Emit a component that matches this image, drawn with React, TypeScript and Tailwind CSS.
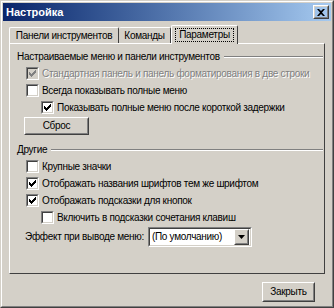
import React from "react";

const font = { fontFamily: '"Liberation Sans", "DejaVu Sans", sans-serif' };

function Check({ checked, disabled }: { checked?: boolean; disabled?: boolean }) {
  return (
    <span
      className={`relative flex h-[13px] w-[13px] shrink-0 items-center justify-center border border-t-[#808080] border-l-[#808080] border-b-white border-r-white ${
        disabled ? "bg-[#d4d0c8]" : "bg-white"
      }`}
    >
      <span className="absolute inset-0 border border-t-[#404040] border-l-[#404040] border-b-[#d4d0c8] border-r-[#d4d0c8]" />
      {checked && (
        <svg width="7" height="7" viewBox="0 0 7 7" className="relative">
          <path
            d="M0 2h1v1h1v1h1v-1h1v-1h1v-1h1v-1h1v3h-1v1h-1v1h-1v1h-1v1h-1v-1h-1v-1h-1z"
            fill={disabled ? "#808080" : "#000"}
          />
        </svg>
      )}
    </span>
  );
}

function Row({
  checked,
  disabled,
  indent,
  children,
}: {
  checked?: boolean;
  disabled?: boolean;
  indent?: boolean;
  children: React.ReactNode;
}) {
  return (
    <div className={`flex h-[17px] items-center gap-[3px] ${indent ? "pl-[31px]" : "pl-[16px]"}`}>
      <Check checked={checked} disabled={disabled} />
      <span
        className={`whitespace-nowrap ${
          disabled ? "text-[#808080] [text-shadow:1px_1px_0_#fff]" : "text-black"
        }`}
      >
        {children}
      </span>
    </div>
  );
}

function Button({ children, className }: { children: React.ReactNode; className?: string }) {
  return (
    <div
      className={`flex items-center justify-center border border-t-white border-l-white border-b-[#404040] border-r-[#404040] ${className ?? ""}`}
    >
      <div className="flex h-full w-full items-center justify-center border border-t-[#d4d0c8] border-l-[#d4d0c8] border-b-[#808080] border-r-[#808080]">
        {children}
      </div>
    </div>
  );
}

function GroupTitle({ children }: { children: React.ReactNode }) {
  return (
    <div className="flex items-center gap-[4px] pl-[7px] pr-[1px]">
      <span className="whitespace-nowrap">{children}</span>
      <div className="flex-1">
        <div className="h-px bg-[#808080]" />
        <div className="h-px bg-white" />
      </div>
    </div>
  );
}

export default function App() {
  return (
    <div
      className="flex h-[308px] w-[334px] flex-col border border-t-[#d4d0c8] border-l-[#d4d0c8] border-b-[#404040] border-r-[#404040] bg-[#d4d0c8] text-[10px] leading-none tracking-[-0.3px]"
      style={font}
    >
      <div className="flex flex-1 flex-col border border-t-white border-l-white border-b-[#808080] border-r-[#808080] px-[1px] pt-[1px]">
        {/* title bar */}
        <div className="flex h-[18px] items-center justify-between bg-gradient-to-r from-[#0a246a] to-[#a6caf0] pl-[3px] pr-[2px]">
          <span className="text-[11px] font-bold tracking-normal text-white">Настройка</span>
          <Button className="h-[14px] w-[16px]">
            <svg width="8" height="7" viewBox="0 0 8 7">
              <path d="M0 0h2l2 2 2-2h2L5 3.5 8 7H6L4 5 2 7H0l3-3.5z" fill="#000" />
            </svg>
          </Button>
        </div>

        {/* tabs */}
        <div className="mt-[3px] flex h-[19px] items-end pl-[6px]">
          <div className="flex h-[16px] w-[110px] items-center justify-center whitespace-nowrap rounded-t-[2px] border border-b-0 border-t-white border-l-white border-r-[#404040]">
            Панели инструментов
          </div>
          <div className="flex h-[16px] w-[52px] items-center justify-center whitespace-nowrap rounded-t-[2px] border border-b-0 border-l-0 border-t-white border-r-[#404040]">
            Команды
          </div>
          <div className="relative z-10 -mb-px flex h-[19px] w-[67px] items-center justify-center rounded-t-[2px] border border-b-0 border-t-white border-l-white border-r-[#404040] bg-[#d4d0c8]">
            <span className="whitespace-nowrap border border-dotted border-black px-[3px] py-[1px]">
              Параметры
            </span>
          </div>
        </div>

        {/* tab panel */}
        <div className="mx-[6px] flex h-[231px] flex-col border border-t-white border-l-white border-b-[#404040] border-r-[#404040] pt-[8px]">
          <GroupTitle>Настраиваемые меню и панели инструментов</GroupTitle>
          <div className="mt-[3px] flex flex-col">
            <Row checked disabled>
              Стандартная панель и панель форматирования в две строки
            </Row>
            <Row>Всегда показывать полные меню</Row>
            <Row checked indent>
              Показывать полные меню после короткой задержки
            </Row>
          </div>
          <div className="mt-[1px] pl-[14px]">
            <Button className="h-[18px] w-[65px]">Сброс</Button>
          </div>

          <div className="mt-[10px]">
            <GroupTitle>Другие</GroupTitle>
          </div>
          <div className="mt-[3px] flex flex-col">
            <Row>Крупные значки</Row>
            <Row checked>Отображать названия шрифтов тем же шрифтом</Row>
            <Row checked>Отображать подсказки для кнопок</Row>
            <Row indent>Включить в подсказки сочетания клавиш</Row>
          </div>
          <div className="mt-[1px] flex items-center gap-[4px] pl-[15px]">
            <span className="whitespace-nowrap">Эффект при выводе меню:</span>
            <div className="flex h-[20px] w-[104px] items-center border border-t-[#808080] border-l-[#808080] border-b-white border-r-white bg-white">
              <div className="flex h-full w-full items-center border border-t-[#404040] border-l-[#404040] border-b-[#d4d0c8] border-r-[#d4d0c8] pl-[2px]">
                <span className="flex-1 whitespace-nowrap">(По умолчанию)</span>
                <Button className="mr-px h-[16px] w-[15px] bg-[#d4d0c8]">
                  <svg width="7" height="4" viewBox="0 0 7 4">
                    <path d="M0 0h7L3.5 4z" fill="#000" />
                  </svg>
                </Button>
              </div>
            </div>
          </div>
        </div>

        <div className="mt-[8px] flex justify-end pr-[16px]">
          <Button className="h-[20px] w-[53px]">Закрыть</Button>
        </div>
      </div>
    </div>
  );
}
